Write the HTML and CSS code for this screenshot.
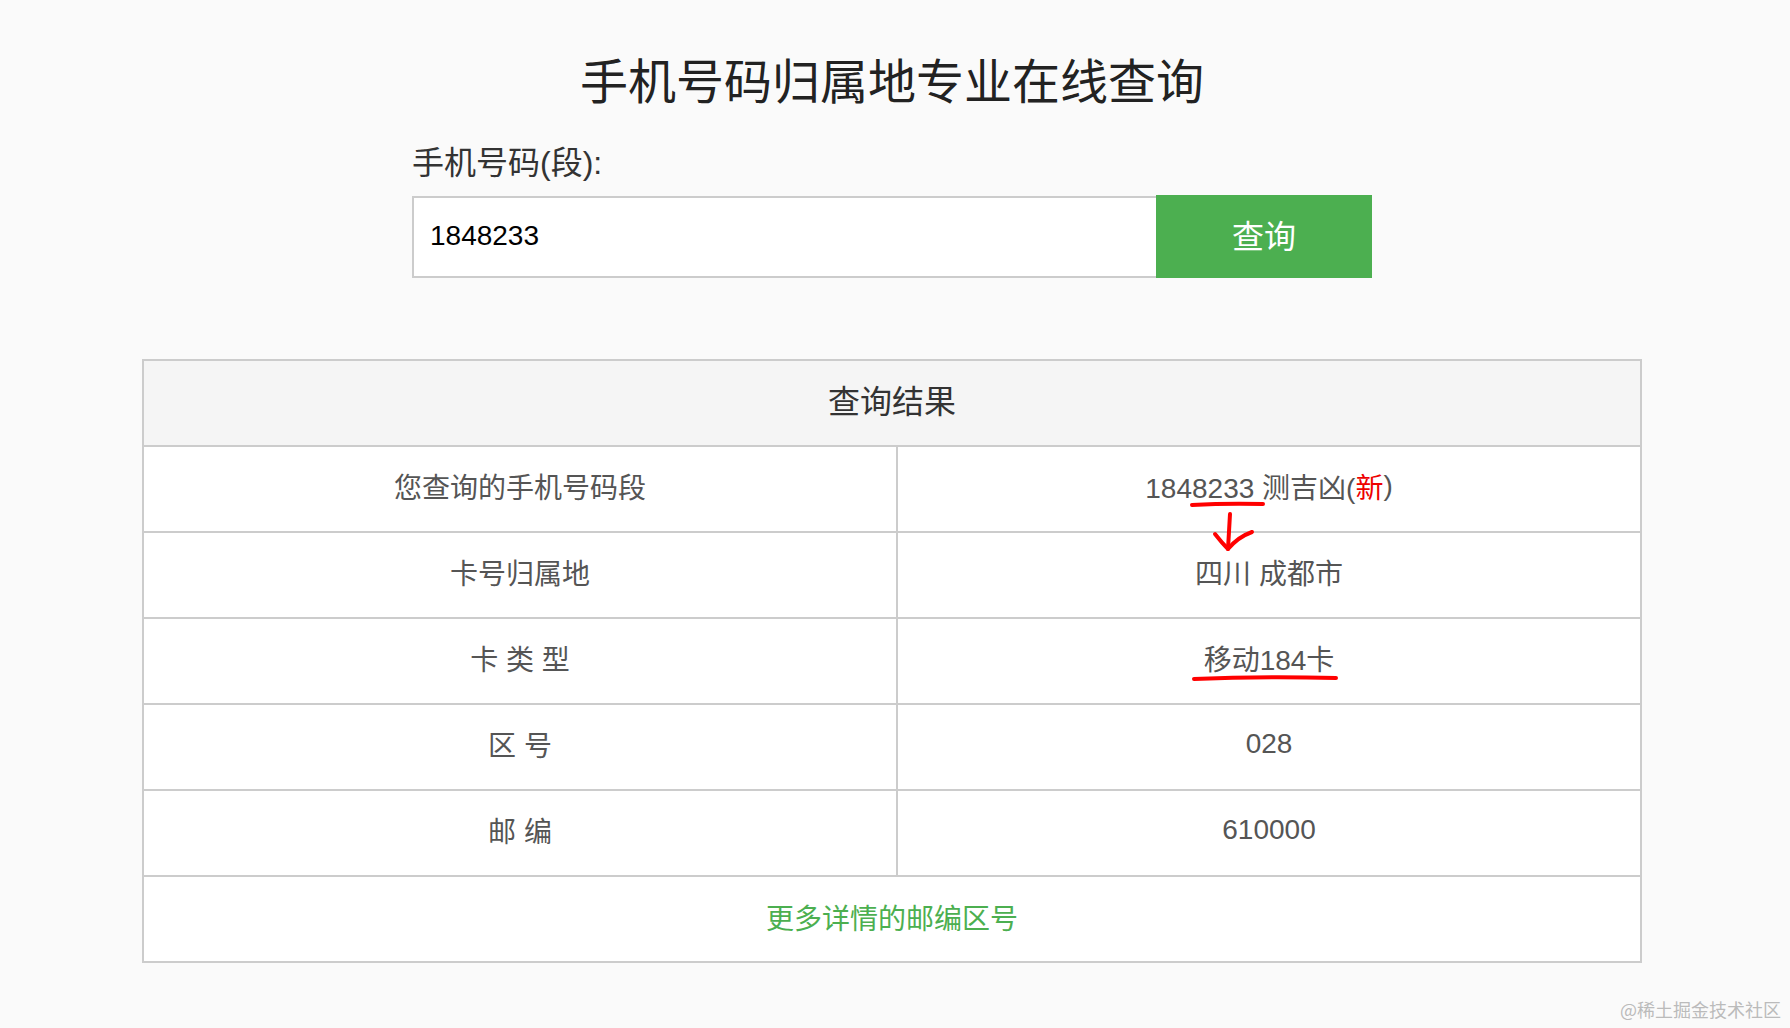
FILE: index.html
```html
<!DOCTYPE html>
<html lang="zh-CN">
<head>
<meta charset="utf-8">
<title>手机号码归属地专业在线查询</title>
<link rel="stylesheet" href="styles.css">
</head>
<body>
<div class="page">
  <h1 class="title">手机号码归属地专业在线查询</h1>
  <form class="search">
    <label class="search-label" for="phone">手机号码(段):</label>
    <div class="search-row">
      <input class="search-input" id="phone" type="text" value="1848233">
      <button class="search-btn" type="button">查询</button>
    </div>
  </form>

  <div class="result">
    <div class="result-head">查询结果</div>
    <div class="result-row">
      <div class="cell cell-key">您查询的手机号码段</div>
      <div class="cell">1848233 测吉凶(<span class="new">新</span>)</div>
    </div>
    <div class="result-row">
      <div class="cell cell-key">卡号归属地</div>
      <div class="cell">四川 成都市</div>
    </div>
    <div class="result-row">
      <div class="cell cell-key">卡 类 型</div>
      <div class="cell">移动184卡</div>
    </div>
    <div class="result-row">
      <div class="cell cell-key">区 号</div>
      <div class="cell">028</div>
    </div>
    <div class="result-row">
      <div class="cell cell-key">邮 编</div>
      <div class="cell">610000</div>
    </div>
    <div class="result-foot"><a class="more-link" href="#">更多详情的邮编区号</a></div>

    <svg class="marks" width="1500" height="604" viewBox="0 0 1500 604">
      <path d="M1050 146 Q1085 144 1121 145" />
      <path d="M1088 155 Q1087 172 1086 190" />
      <path d="M1073 175 Q1080 184 1086 190 Q1096 178 1110 173" />
      <path d="M1052 320 Q1120 317 1194 319" />
    </svg>
  </div>
</div>
<div class="watermark">@稀土掘金技术社区</div>
</body>
</html>
```

FILE: styles.css
```css
html, body {
  margin: 0;
  padding: 0;
}

body {
  background: #fafafa;
  font-family: "Liberation Sans", "Noto Sans CJK SC", sans-serif;
  color: #555;
  min-height: 1028px;
  position: relative;
  padding-right: 6px;
  box-sizing: border-box;
}

.page {
  width: 1500px;
  margin: 0 auto;
  padding-top: 50px;
}

.title {
  margin: 0;
  font-family: "Noto Sans CJK SC", sans-serif;
  font-size: 48px;
  font-weight: 400;
  line-height: 56px;
  color: #222;
  text-align: center;
}

.search {
  width: 960px;
  margin: 37px auto 0;
}

.search-label {
  display: block;
  font-size: 32px;
  line-height: 40px;
  color: #333;
  margin-bottom: 12px;
}

.search-row {
  display: flex;
  height: 83px;
}

.search-input {
  flex: 1;
  box-sizing: border-box;
  height: 82px;
  margin-top: 1px;
  border: 2px solid #ccc;
  border-right: none;
  background: #fff;
  padding: 0 16px 2px;
  font-family: "Liberation Sans", sans-serif;
  font-size: 28px;
  color: #000;
  outline: none;
}

.search-btn {
  width: 216px;
  height: 83px;
  border: none;
  background: #4caf50;
  color: #fff;
  font-family: "Noto Sans CJK SC", sans-serif;
  font-size: 32px;
  font-weight: 400;
  padding: 0 0 6px;
}

.result {
  position: relative;
  margin-top: 81px;
  border: 2px solid #ccc;
  background: #fff;
}

.result-head {
  height: 84px;
  box-sizing: border-box;
  padding-bottom: 8px;
  border-bottom: 2px solid #ccc;
  background: #f5f5f5;
  display: flex;
  align-items: center;
  justify-content: center;
  font-size: 32px;
  color: #333;
  height: 86px;
}

.result-row {
  display: grid;
  grid-template-columns: 754px 1fr;
  height: 86px;
  box-sizing: border-box;
  border-bottom: 2px solid #ccc;
}

.cell {
  display: flex;
  align-items: center;
  justify-content: center;
  padding-bottom: 6px;
  font-size: 28px;
  color: #555;
  white-space: pre;
}

.cell-key {
  border-right: 2px solid #ccc;
}

.new {
  color: #e00;
}

.result-foot {
  height: 84px;
  box-sizing: border-box;
  padding-bottom: 4px;
  display: flex;
  align-items: center;
  justify-content: center;
}

.more-link {
  font-size: 28px;
  color: #4caf50;
  text-decoration: none;
}

.marks {
  position: absolute;
  left: -2px;
  top: -2px;
  pointer-events: none;
  fill: none;
  stroke: #f00;
  stroke-width: 4;
  stroke-linecap: round;
  stroke-linejoin: round;
}

.watermark {
  position: absolute;
  right: 9px;
  bottom: 6px;
  font-family: "Noto Sans CJK SC", sans-serif;
  font-size: 18px;
  color: #bbb;
}
```
